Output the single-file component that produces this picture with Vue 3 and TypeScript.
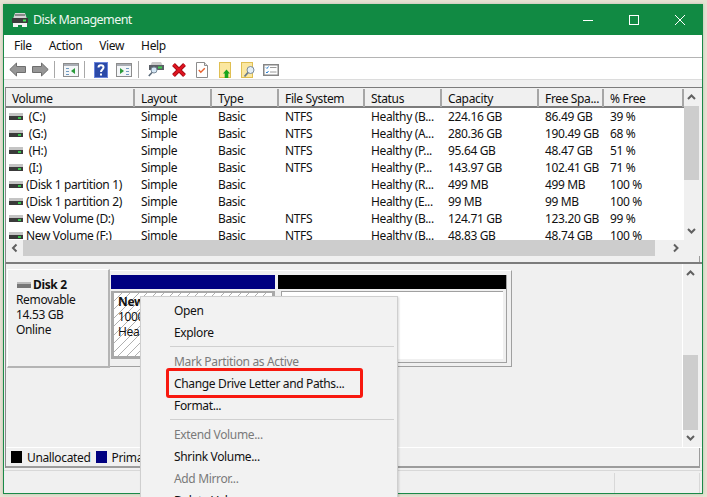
<script setup lang="ts">
interface VolumeRow {
  name: string
  fs: string
  status: string
  capacity: string
  free: string
  pct: string
}

const columns = ['Volume', 'Layout', 'Type', 'File System', 'Status', 'Capacity', 'Free Spa...', '% Free']

const rows: VolumeRow[] = [
  { name: ' (C:)', fs: 'NTFS', status: 'Healthy (B...', capacity: '224.16 GB', free: '86.49 GB', pct: '39 %' },
  { name: ' (G:)', fs: 'NTFS', status: 'Healthy (A...', capacity: '280.36 GB', free: '190.49 GB', pct: '68 %' },
  { name: ' (H:)', fs: 'NTFS', status: 'Healthy (P...', capacity: '95.64 GB', free: '48.47 GB', pct: '51 %' },
  { name: ' (I:)', fs: 'NTFS', status: 'Healthy (P...', capacity: '143.97 GB', free: '102.41 GB', pct: '71 %' },
  { name: '(Disk 1 partition 1)', fs: '', status: 'Healthy (R...', capacity: '499 MB', free: '499 MB', pct: '100 %' },
  { name: '(Disk 1 partition 2)', fs: '', status: 'Healthy (E...', capacity: '99 MB', free: '99 MB', pct: '100 %' },
  { name: 'New Volume (D:)', fs: 'NTFS', status: 'Healthy (B...', capacity: '124.71 GB', free: '123.20 GB', pct: '99 %' },
  { name: 'New Volume (F:)', fs: 'NTFS', status: 'Healthy (B...', capacity: '48.83 GB', free: '48.74 GB', pct: '100 %' },
]

const menuItems = [
  { label: 'Open' },
  { label: 'Explore' },
  { sep: true },
  { label: 'Mark Partition as Active', off: true },
  { label: 'Change Drive Letter and Paths...' },
  { label: 'Format...' },
  { sep: true },
  { label: 'Extend Volume...', off: true },
  { label: 'Shrink Volume...' },
  { label: 'Add Mirror...', off: true },
  { label: 'Delete Volume...' },
]
</script>

<template>
  <div class="page">
    <div class="window">
      <header class="titlebar">
        <svg class="app-icon" viewBox="0 0 16 16" width="16" height="16">
          <path d="M3 1h10l2 6H1z" fill="#d4d4d4" />
          <rect x="3" y="2" width="10" height="2" fill="#8a8a8a" />
          <rect x="0" y="6" width="16" height="5" fill="#3c3c3c" />
          <rect x="11" y="7.500" width="3" height="2" fill="#46e05a" />
          <path d="M1 11h14v4h-5v-2H6v2H1z" fill="#f2f2f2" />
        </svg>
        <span class="title">Disk Management</span>
        <div class="caption">
          <svg viewBox="0 0 46 30" width="46" height="30"><path d="M18 15.500h10" stroke="#fff" fill="none" /></svg>
          <svg viewBox="0 0 46 30" width="46" height="30"><rect x="18.500" y="10.500" width="9" height="9" stroke="#fff" fill="none" /></svg>
          <svg viewBox="0 0 46 30" width="46" height="30"><path d="M18 10l10 10M28 10L18 20" stroke="#fff" fill="none" /></svg>
        </div>
      </header>

      <nav class="menubar">
        <span>File</span><span>Action</span><span>View</span><span>Help</span>
      </nav>

      <div class="toolbar">
        <button class="tool">
          <svg viewBox="0 0 17 15" width="17" height="15"><path d="M.8 7.500L7.500 1v3.500h9v6h-9V14z" fill="#969696" stroke="#6e6e6e" /></svg>
        </button>
        <button class="tool">
          <svg viewBox="0 0 17 15" width="17" height="15"><path d="M16.200 7.500L9.500 1v3.500h-9v6h9V14z" fill="#969696" stroke="#6e6e6e" /></svg>
        </button>
        <i class="tool-sep"></i>
        <button class="tool">
          <svg viewBox="0 0 16 14" width="16" height="14">
            <rect x=".5" y=".5" width="15" height="13" fill="#f4f6f8" stroke="#8c8c8c" />
            <rect x="1" y="1" width="14" height="2" fill="#a9adb4" />
            <path d="M3 5.500h3M3 8.500h3M3 11.500h3" stroke="#6f9ac0" />
            <path d="M12 5v6L8 8z" fill="#2a9a3a" />
          </svg>
        </button>
        <i class="tool-sep"></i>
        <button class="tool">
          <svg viewBox="0 0 14 16" width="14" height="16">
            <rect width="14" height="16" fill="#2b4aa8" />
            <rect x=".5" y=".5" width="13" height="15" fill="none" stroke="#6a84dc" />
            <path d="M4.500 5.500C4.500 2.500 9.500 2.500 9.500 5.500 9.500 7.500 7 7.500 7 10" stroke="#fff" stroke-width="2" fill="none" />
            <rect x="6" y="11.500" width="2" height="2" fill="#fff" />
          </svg>
        </button>
        <button class="tool">
          <svg viewBox="0 0 16 14" width="16" height="14">
            <rect x=".5" y=".5" width="15" height="13" fill="#f4f6f8" stroke="#8c8c8c" />
            <rect x="1" y="1" width="14" height="2" fill="#a9adb4" />
            <path d="M10 5.500h3M10 8.500h3M10 11.500h3" stroke="#6f9ac0" />
            <path d="M4 5v6l4-3z" fill="#2a9a3a" />
          </svg>
        </button>
        <i class="tool-sep wide"></i>
        <button class="tool">
          <svg viewBox="0 0 16 15" width="16" height="15">
            <path d="M4 0h9l2 4H2z" fill="#c8c8c8" />
            <rect x="1" y="3" width="15" height="5" fill="#5a5f66" />
            <rect x="10" y="4.500" width="4" height="2" fill="#3fd04f" />
            <circle cx="6" cy="8" r="3" fill="#d4e6f4" stroke="#7a8a9a" />
            <path d="M4 10.500L.8 14" stroke="#5a6a7a" stroke-width="1.600" />
          </svg>
        </button>
        <button class="tool">
          <svg viewBox="0 0 14 14" width="14" height="14">
            <path d="M1.500 1.500l11 11M12.500 1.500l-11 11" stroke="#a00a14" stroke-width="4" />
            <path d="M1.500 1.500l11 11M12.500 1.500l-11 11" stroke="#e01420" stroke-width="2.400" />
          </svg>
        </button>
        <button class="tool">
          <svg viewBox="0 0 12 16" width="12" height="16">
            <path d="M.5.5h8l3 3v12H.5z" fill="#fff" stroke="#8c8c8c" />
            <path d="M8.500.5v3h3" fill="#e4e4e4" stroke="#8c8c8c" />
            <path d="M2.800 8l2 2.200 4-4" stroke="#e8602c" stroke-width="1.400" fill="none" />
          </svg>
        </button>
        <button class="tool">
          <svg viewBox="0 0 12 16" width="12" height="16">
            <rect x=".5" y=".5" width="11" height="15" fill="#fbe7a0" stroke="#e0bf52" />
            <path d="M7.500 7.500L11 11.500H9.300V16H5.700v-4.500H4z" fill="#17a51c" />
          </svg>
        </button>
        <button class="tool">
          <svg viewBox="0 0 14 16" width="14" height="16">
            <rect x=".5" y=".5" width="11" height="15" fill="#fbe7a0" stroke="#e0bf52" />
            <circle cx="9.500" cy="8" r="3.500" fill="#e4eef6" stroke="#7a8a9a" />
            <path d="M7 10.500L3.500 14.500" stroke="#6a7a8a" stroke-width="1.800" />
          </svg>
        </button>
        <button class="tool">
          <svg viewBox="0 0 16 12" width="16" height="12">
            <rect x=".75" y=".75" width="14.500" height="10.500" fill="#fff" stroke="#868686" stroke-width="1.500" />
            <path d="M3 3.500l1 1 1.500-2M3 8l1 1 1.500-2" stroke="#2a7fd0" fill="none" />
            <path d="M7 3.500h6.500M7 8h6.500" stroke="#9a9a9a" />
          </svg>
        </button>
      </div>

      <div class="strip"></div>

      <section class="list-pane">
        <div class="list-top">
          <div class="list-view">
            <div class="list-head">
              <span v-for="c in columns" :key="c" class="head-cell">{{ c }}</span>
            </div>
            <div class="list-body">
              <div v-for="r in rows" :key="r.name" class="list-row">
                <span class="cell name">
                  <svg class="drive" viewBox="0 0 14 8" width="14" height="8">
                    <rect y="0" width="14" height="3" fill="#c4c4c4" />
                    <rect y="3" width="14" height="4" fill="#3a3a3a" />
                    <rect x="9" y="4" width="3" height="2" fill="#35c24a" />
                  </svg>
                  <span class="name-text">{{ r.name }}</span>
                </span>
                <span class="cell">Simple</span>
                <span class="cell">Basic</span>
                <span class="cell">{{ r.fs }}</span>
                <span class="cell">{{ r.status }}</span>
                <span class="cell">{{ r.capacity }}</span>
                <span class="cell">{{ r.free }}</span>
                <span class="cell">{{ r.pct }}</span>
              </div>
            </div>
          </div>
          <div class="vscroll">
            <svg viewBox="0 0 15 17" width="15" height="17"><path d="M4 11l3.500-3.500L11 11" stroke="#606060" stroke-width="2" fill="none" /></svg>
            <div class="vthumb top"></div>
            <svg viewBox="0 0 15 17" width="15" height="17"><path d="M4 6l3.500 3.500L11 6" stroke="#606060" stroke-width="2" fill="none" /></svg>
          </div>
        </div>
        <div class="hscroll">
          <svg class="arrow" viewBox="0 0 17 16" width="17" height="16"><path d="M10.500 4.500L7 8l3.500 3.500" stroke="#606060" stroke-width="2" fill="none" /></svg>
          <div class="hthumb"></div>
          <svg class="arrow" viewBox="0 0 17 16" width="17" height="16"><path d="M7 4.500L10.500 8 7 11.500" stroke="#606060" stroke-width="2" fill="none" /></svg>
        </div>
        <div class="list-foot"></div>
      </section>

      <section class="disk-pane">
        <div class="disk-top">
          <div class="disk-area">
            <div class="disk-label">
              <div class="disk-name">
                <svg viewBox="0 0 14 6" width="14" height="6">
                  <rect width="14" height="2" fill="#bbb" />
                  <rect y="2" width="14" height="4" fill="#777" />
                </svg>
                <b>Disk 2</b>
              </div>
              <div>Removable</div>
              <div>14.53 GB</div>
              <div>Online</div>
            </div>
            <div class="partitions">
              <div class="part first">
                <div class="part-bar navy"></div>
                <div class="part-box hatch">
                  <b>New</b>
                  <div>1000</div>
                  <div>Hea</div>
                </div>
              </div>
              <div class="part second">
                <div class="part-bar black"></div>
                <div class="part-box plain"></div>
              </div>
            </div>
          </div>
          <div class="vscroll">
            <svg viewBox="0 0 15 17" width="15" height="17"><path d="M4 11l3.500-3.500L11 11" stroke="#606060" stroke-width="2" fill="none" /></svg>
            <div class="vthumb bottom"></div>
            <svg viewBox="0 0 15 17" width="15" height="17"><path d="M4 6l3.500 3.500L11 6" stroke="#606060" stroke-width="2" fill="none" /></svg>
          </div>
        </div>
        <div class="legend">
          <i class="swatch black"></i><span>Unallocated</span>
          <i class="swatch navy"></i><span>Prima</span>
        </div>
      </section>

      <footer class="statusbar">
        <i></i><i></i>
      </footer>
    </div>

    <ul class="context-menu">
      <template v-for="(m, i) in menuItems" :key="i">
        <li v-if="m.sep" class="menu-sep"></li>
        <li v-else class="menu-item" :class="{ off: m.off }">{{ m.label }}</li>
      </template>
    </ul>
    <div class="highlight"></div>
  </div>
</template>

<style>
html,
body {
  margin: 0;
  overflow: hidden;
}
</style>

<style scoped>
.page {
  position: relative;
  width: 707px;
  height: 497px;
  overflow: hidden;
  box-sizing: border-box;
  padding: 4px 4px 3px 3px;
  background: #e6e2d2;
  font: 12px/17px "Noto Sans", sans-serif;
  letter-spacing: -0.35px;
  color: #111;
}
.window {
  height: 100%;
  display: flex;
  flex-direction: column;
  box-sizing: border-box;
  border: 1px solid #1a8a48;
  border-top: 0;
  background: #f0f0f0;
  box-shadow: 0 0 3px rgba(0, 0, 0, 0.18);
}
.titlebar {
  height: 31px;
  flex: none;
  display: flex;
  align-items: center;
  background: #118a43;
  color: #eef7f1;
  margin: 0 -1px;
  padding-left: 9px;
  font-size: 12.500px;
  letter-spacing: -0.55px;
}
.app-icon {
  margin-right: 5px;
}
.caption {
  margin-left: auto;
  display: flex;
}
.menubar {
  height: 22px;
  flex: none;
  background: #fff;
  border-bottom: 1px solid #b4b4b4;
  display: flex;
  gap: 17px;
  padding-left: 10px;
  line-height: 22px;
}
.toolbar {
  height: 22px;
  flex: none;
  box-sizing: border-box;
  background: #fff;
  display: flex;
  align-items: center;
  padding: 2px 0 0 2px;
  border-bottom: 1px solid #dcdcdc;
}
.tool {
  width: 23px;
  height: 19px;
  padding: 0;
  border: 0;
  background: none;
  display: flex;
  align-items: center;
  justify-content: center;
}
.tool-sep {
  width: 1px;
  height: 17px;
  background: #a8a8a8;
  margin: 0 4px 0 2px;
}
.tool-sep.wide {
  margin: 0 5px 0 3px;
}
.strip {
  height: 7px;
  flex: none;
}
.list-pane {
  height: 177px;
  flex: none;
  display: flex;
  flex-direction: column;
  margin: 0 0 0 1px;
  box-sizing: border-box;
  border-left: 1px solid #8a8a8a;
  border-top: 1px solid #7c7c7c;
  border-bottom: 2px solid #7c7c7c;
  background: #f0f0f0;
}
.list-top {
  height: 152px;
  flex: none;
  display: flex;
}
.list-view {
  width: 678px;
  flex: none;
  overflow: hidden;
  background: #fff;
}
.list-head,
.list-row {
  display: grid;
  grid-template-columns: 129px 77px 67px 86px 77px 97px 65px 80px;
}
.list-head {
  height: 20px;
  box-sizing: border-box;
  border-bottom: 2px solid #7c7c7c;
  background: #f0f0f0;
}
.head-cell {
  padding: 1px 0 0 6px;
  line-height: 17px;
  box-sizing: border-box;
  border-right: 2px solid #a6a6a6;
  white-space: nowrap;
  overflow: hidden;
  position: relative;
  top: 1px;
}
.list-row {
  height: 17px;
}
.cell {
  padding-left: 6px;
  white-space: nowrap;
  overflow: hidden;
}
.name {
  padding-left: 3px;
  display: flex;
  align-items: center;
}
.drive {
  flex: none;
  margin-right: 3px;
}
.name-text {
  white-space: pre;
}
.hscroll {
  height: 16px;
  width: 678px;
  flex: none;
  display: flex;
  align-items: center;
}
.hthumb {
  width: 632px;
  height: 100%;
  background: #cdcdcd;
  margin-right: auto;
}
.list-foot {
  flex: 1;
  margin-right: 2px;
  border-right: 1px solid #9c9c9c;
}
.vscroll {
  width: 15px;
  flex: none;
  display: flex;
  flex-direction: column;
}
.list-top .vscroll {
  background: #f0f0f0;
}
.vthumb {
  background: #cdcdcd;
  flex: none;
}
.vthumb.top {
  height: 74px;
  margin-top: 1px;
  margin-bottom: auto;
}
.vthumb.bottom {
  height: 75px;
  margin-top: auto;
}
.disk-pane {
  height: 204px;
  flex: none;
  display: flex;
  flex-direction: column;
  margin-left: 1px;
  border-left: 1px solid #8a8a8a;
  box-sizing: border-box;
}
.disk-top {
  height: 184px;
  flex: none;
  display: flex;
  box-sizing: border-box;
  border-bottom: 1px solid #fff;
}
.disk-area {
  width: 677px;
  flex: none;
  display: flex;
  align-items: flex-start;
  padding: 5px 0 0 1px;
  box-sizing: border-box;
  border-right: 1px solid #fff;
}
.disk-label {
  width: 103px;
  height: 99px;
  flex: none;
  box-sizing: border-box;
  padding: 7px 0 0 8px;
  border-left: 1px solid #fff;
  border-right: 2px solid #b4b4b4;
  border-bottom: 2px solid #b4b4b4;
  border-top: 1px solid #fff;
  line-height: 15px;
}
.disk-name {
  display: flex;
  align-items: center;
  gap: 2px;
  line-height: 15px;
  margin-left: 1px;
}
.partitions {
  width: 402px;
  height: 97px;
  flex: none;
  display: flex;
  align-items: flex-start;
  gap: 3px;
  margin-top: 1px;
  padding: 4px 0 0 1px;
  box-sizing: border-box;
  border-top: 1px solid #fff;
  border-right: 1px solid #a0a0a0;
  border-bottom: 1px solid #a0a0a0;
}
.part.first {
  width: 164px;
  flex: none;
}
.part.second {
  width: 229px;
  height: 88px;
  flex: none;
  box-sizing: border-box;
  border-right: 1px solid #a0a0a0;
  border-bottom: 1px solid #a0a0a0;
}
.part-bar {
  height: 14px;
}
.navy {
  background: #000080;
}
.black {
  background: #000;
}
.part-box {
  height: 68px;
  margin-top: 2px;
  box-sizing: border-box;
  border: 3px solid #a8a8a8;
  border-top-width: 2px;
  line-height: 15px;
  padding: 1px 0 0 4px;
  overflow: hidden;
}
.hatch {
  background: repeating-linear-gradient(135deg, #fff 0 5.300px, #b0b0b0 5.300px 6px);
}
.plain {
  margin: 2px 3px 0;
  border: 0;
  border-top: 1px solid #a0a0a0;
  border-left: 1px solid #a0a0a0;
  background: #fff;
}
.legend {
  height: 20px;
  flex: none;
  display: flex;
  align-items: center;
  padding-left: 5px;
  margin-right: 2px;
  box-sizing: border-box;
  border-right: 1px solid #9c9c9c;
  border-bottom: 2px solid #9c9c9c;
}
.swatch {
  width: 11px;
  height: 12px;
  margin-right: 5px;
}
.legend span {
  margin-right: 5px;
}
.statusbar {
  flex: 1;
  display: flex;
  justify-content: flex-end;
  margin-top: 2px;
  padding-right: 2px;
  border-top: 1px solid #d8d8d8;
}
.statusbar i {
  width: 1px;
  background: #d8d8d8;
  margin: 2px 0 0 84px;
}
.context-menu {
  position: absolute;
  left: 140px;
  top: 296px;
  width: 258px;
  height: 210px;
  box-sizing: border-box;
  margin: 0;
  padding: 3px 2px;
  list-style: none;
  background: #f2f2f2;
  border: 1px solid #cfcfcf;
  box-shadow: 1px 1px 2px rgba(0, 0, 0, 0.15);
}
.menu-item {
  height: 22px;
  line-height: 22px;
  padding-left: 31px;
}
.menu-item.off {
  color: #7a7a7a;
}
.menu-sep {
  height: 1px;
  margin: 2px 1px 4px 27px;
  background: #d0d0d0;
}
.highlight {
  position: absolute;
  left: 166px;
  top: 368px;
  width: 197px;
  height: 30px;
  box-sizing: border-box;
  border: 3px solid #f8190f;
  border-radius: 3px;
}
</style>
